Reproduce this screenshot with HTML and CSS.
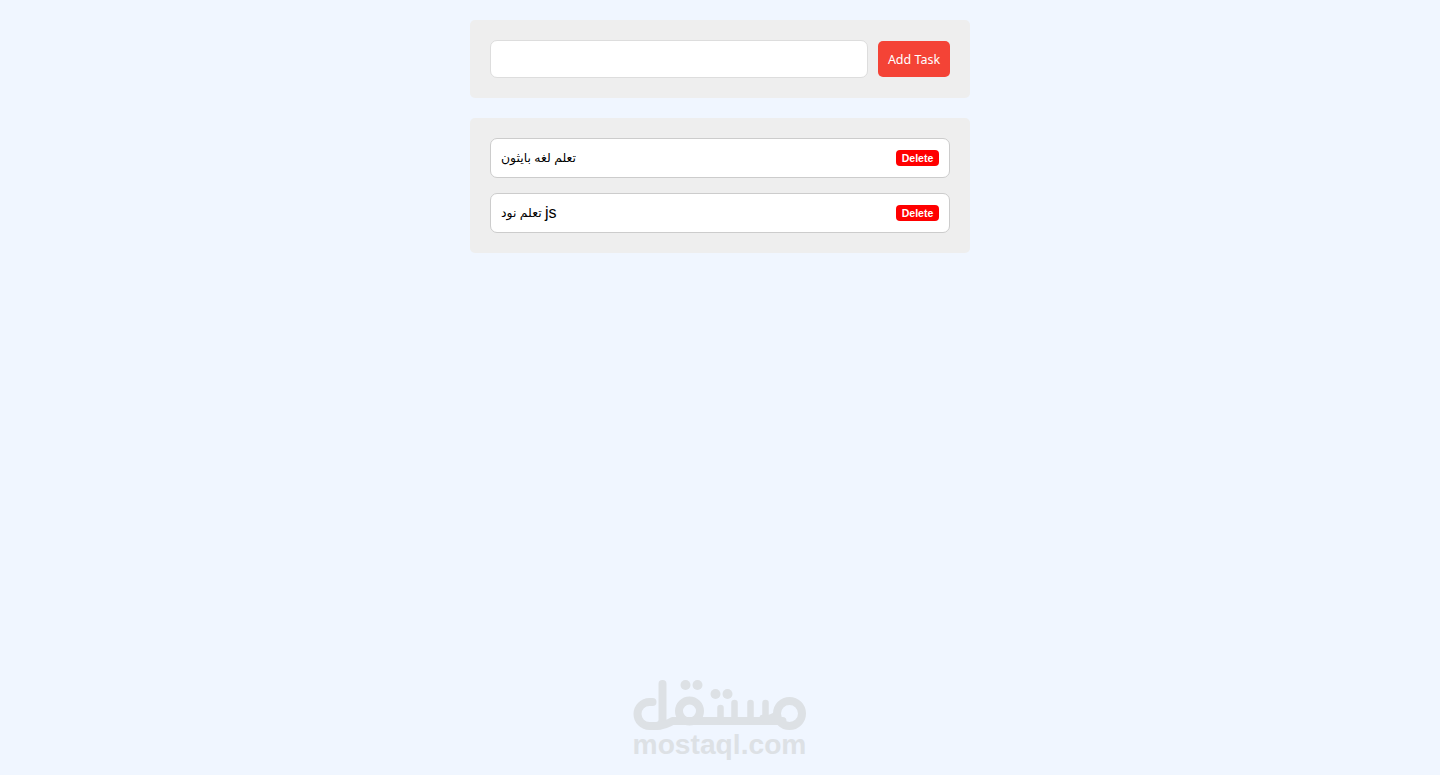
FILE: index.html
```html
<!DOCTYPE html>
<html lang="en">
<head>
<meta charset="utf-8">
<title>Tasks</title>
<link rel="stylesheet" href="styles.css">
</head>
<body>
<main class="container">
  <form class="form">
    <input class="input" type="text">
    <button class="add" type="button">Add Task</button>
  </form>
  <section class="tasks">
    <div class="task"><span><span class="ar">تعلم لغه بايثون</span></span><button class="delete" type="button">Delete</button></div>
    <div class="task"><span><span class="ar">تعلم نود</span> js</span><button class="delete" type="button">Delete</button></div>
  </section>
</main>
<div class="mark">
  <svg class="mark-logo" viewBox="0 0 174 50" aria-hidden="true">
    <g fill="none" stroke="#dde1e5" stroke-linecap="round" stroke-linejoin="round">
      <g stroke-width="8">
        <path d="M20 22H17A12 12 0 0 0 17 46H24Q30 46 30 40V4"/>
        <path d="M24 46Q34 45 40 41H150"/>
        <circle cx="57" cy="31" r="10.500"/>
      </g>
      <g stroke-width="6.500">
        <path d="M88 40V28M102 40V23M118 40V23M133 40V23"/>
        <path d="M130 38Q136 40 145 34"/>
      </g>
      <circle cx="157" cy="33.500" r="12.500" stroke-width="8"/>
    </g>
    <g fill="#dde1e5">
      <circle cx="53" cy="5" r="5"/><circle cx="65" cy="5" r="5"/>
      <circle cx="83" cy="14" r="5"/><circle cx="95" cy="14" r="5"/>
    </g>
  </svg>
  <div class="mark-text">mostaql.com</div>
</div>
</body>
</html>
```
FILE: styles.css
```css
* { box-sizing: border-box; }
html, body { height: 100%; }
body {
  margin: 0;
  background: #f0f6ff;
  font-family: "Liberation Sans", "DejaVu Sans", sans-serif;
  overflow: hidden;
}
.container {
  width: 500px;
  margin: 0 auto;
  padding-top: 20px;
  display: flex;
  flex-direction: column;
  gap: 20px;
}
.form, .tasks {
  background: #eee;
  border-radius: 5px;
  padding: 20px;
}
.form { display: flex; align-items: center; gap: 10px; }
.input {
  flex: 1;
  min-width: 0;
  height: 38px;
  background: #fff;
  border: 1px solid #ddd;
  border-radius: 7px;
}
.add {
  width: 72px;
  height: 36px;
  background: #f44336;
  color: #fff;
  border: 0;
  border-radius: 5px;
  font: 12.5px "Noto Sans", "Open Sans", sans-serif;
  padding: 0;
}
.tasks { display: flex; flex-direction: column; gap: 15px; }
.task {
  height: 40px;
  display: flex;
  align-items: center;
  justify-content: space-between;
  background: #fff;
  border: 1px solid #ccc;
  border-radius: 7px;
  padding: 0 10px;
  font-size: 16px;
  color: #000;
  white-space: nowrap;
}
.ar { font-size: 12.4px; vertical-align: 1px; margin-right: -1px; }
.delete {
  width: 43px;
  height: 16px;
  background: #f00;
  color: #fff;
  border: 0;
  border-radius: 4px;
  font: bold 10.5px "Liberation Sans", sans-serif;
  padding: 0;
}
.mark {
  position: absolute;
  left: 632px;
  top: 680px;
  width: 175px;
}
.mark-logo { display: block; width: 175px; height: 50px; overflow: visible; }
.mark-text {
  font: bold 28.2px/28px "Liberation Sans", sans-serif;
  color: #dde1e5;
  text-align: center;
  white-space: nowrap;
}
```
